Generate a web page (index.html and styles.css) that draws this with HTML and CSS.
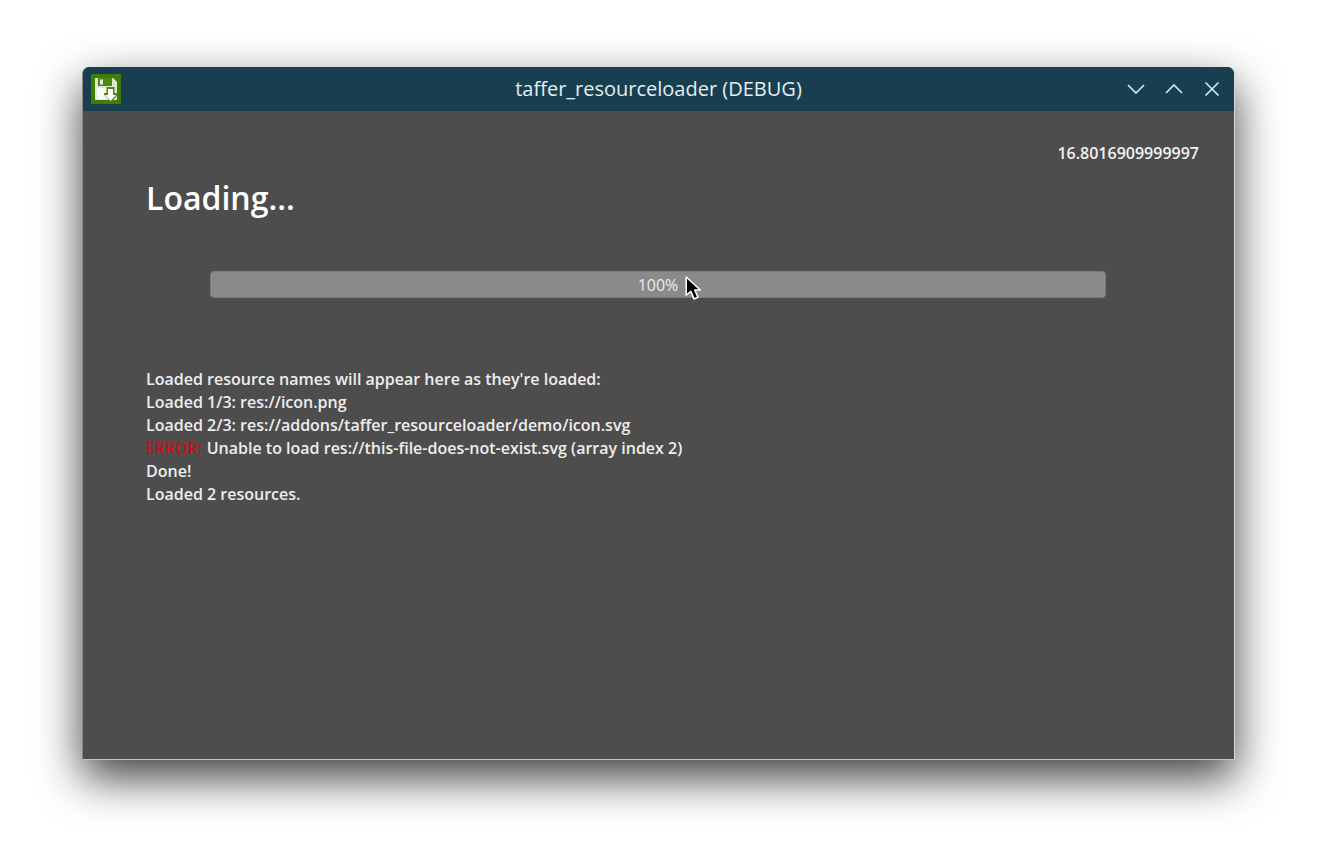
FILE: index.html
```html
<!DOCTYPE html>
<html lang="en">
<head>
<meta charset="utf-8">
<title>taffer_resourceloader (DEBUG)</title>
<link rel="stylesheet" href="styles.css">
</head>
<body>
<div class="window">
  <header class="titlebar">
    <svg class="app-icon" width="30" height="30" viewBox="0 0 30 30" aria-hidden="true">
      <rect width="30" height="30" fill="#3f7d08"/>
      <path d="M4 4h18l4 4v18H4z" fill="#dfe9cf"/>
      <rect x="7" y="4" width="14" height="8" fill="#4b8a12"/>
      <rect x="9" y="5.500" width="3" height="5" fill="#e6eedb"/>
      <rect x="6" y="14" width="14" height="11" fill="#f7f9f2"/>
      <path d="M15.500 13h8v6h3.500v1.500L20 28.500l-7-8V19h2.500z" fill="#4b8a12"/>
      <path d="M17 15h5v6h3l-5.500 6-5.500-6h3z" fill="#fff"/>
    </svg>
    <div class="title">taffer_resourceloader (DEBUG)</div>
    <div class="controls">
      <svg width="18" height="18" viewBox="0 0 18 18" aria-hidden="true"><path d="M1 5l8 8 8-8" class="ctl"/></svg>
      <svg width="18" height="18" viewBox="0 0 18 18" aria-hidden="true"><path d="M1 13l8-8 8 8" class="ctl"/></svg>
      <svg width="18" height="18" viewBox="0 0 18 18" aria-hidden="true"><path d="M2.500 2.500l13 13M15.500 2.500l-13 13" class="ctl"/></svg>
    </div>
  </header>
  <main class="content">
    <div class="timer">16.8016909999997</div>
    <h1 class="heading">Loading...</h1>
    <div class="progress">100%</div>
    <div class="log">
      <div>Loaded resource names will appear here as they're loaded:</div>
      <div>Loaded 1/3: res://icon.png</div>
      <div>Loaded 2/3: res://addons/taffer_resourceloader/demo/icon.svg</div>
      <div><span class="err">ERROR:</span> Unable to load res://this-file-does-not-exist.svg (array index 2)</div>
      <div>Done!</div>
      <div>Loaded 2 resources.</div>
    </div>
    <svg class="cursor" width="17" height="25" viewBox="0 0 16 24" aria-hidden="true">
      <path d="M1 1v17.500l4.500-3.700 3 7.200 3.700-1.600-3-7h5.300z" fill="#000" stroke="#fff" stroke-width="1.500" stroke-linejoin="round"/>
    </svg>
  </main>
</div>
</body>
</html>
```
FILE: styles.css
```css
* { box-sizing: border-box; }
html, body { margin: 0; height: 100%; }
body {
  background: #fff;
  padding: 67px 83px 0 82px;
  overflow: hidden;
  font-family: "Open Sans", "Noto Sans", sans-serif;
  color: #f0f0f0;
}
.window {
  height: 693px;
  display: flex;
  flex-direction: column;
  background: #4d4d4d;
  border-radius: 7px 7px 0 0;
  box-shadow: 0 18px 45px rgba(0, 0, 0, 0.75);
  border-bottom: 1px solid #c4c4c4;
  border-right: 1px solid #d8d8d8;
  border-left: 1px solid #8a8a8a;
}
.titlebar {
  flex: 0 0 44px;
  display: grid;
  grid-template-columns: 1fr auto 1fr;
  align-items: center;
  background: #173f50;
  border-radius: 7px 7px 0 0;
  padding: 0 13px 0 8px;
}
.app-icon { display: block; margin-bottom: 1px; }
.title {
  font-size: 20px;
  color: #e6eef0;
  white-space: nowrap;
  margin-left: 5px;
  margin-bottom: 1px;
}
.controls { display: flex; gap: 20px; align-items: center; justify-self: end; }
.controls svg { display: block; }
.ctl { fill: none; stroke: #cfe6ee; stroke-width: 1.700; }
.content {
  flex: 1;
  position: relative;
  padding: 31px 35px 0 63px;
}
.timer { text-align: right; font-size: 16px; line-height: 23px; font-weight: 600; color: #f2f2f2; }
.heading {
  margin: 11px 0 0;
  font-size: 32px;
  line-height: 44px;
  font-weight: 600;
  color: #fff;
}
.progress {
  margin: 51px 64px 0;
  width: 896px;
  height: 27px;
  background: #8a8a8a;
  border-radius: 4px;
  border: 1px solid #7b7b7b;
  text-align: center;
  font-size: 16px;
  line-height: 27px;
  font-weight: 500;
  color: #eeeeee;
}
.log {
  margin-top: 70px;
  font-size: 16px;
  line-height: 23px;
  font-weight: 600;
  color: #ededed;
}
.err { color: #c8101c; }
.cursor { position: absolute; left: 602px; top: 165px; }
```
